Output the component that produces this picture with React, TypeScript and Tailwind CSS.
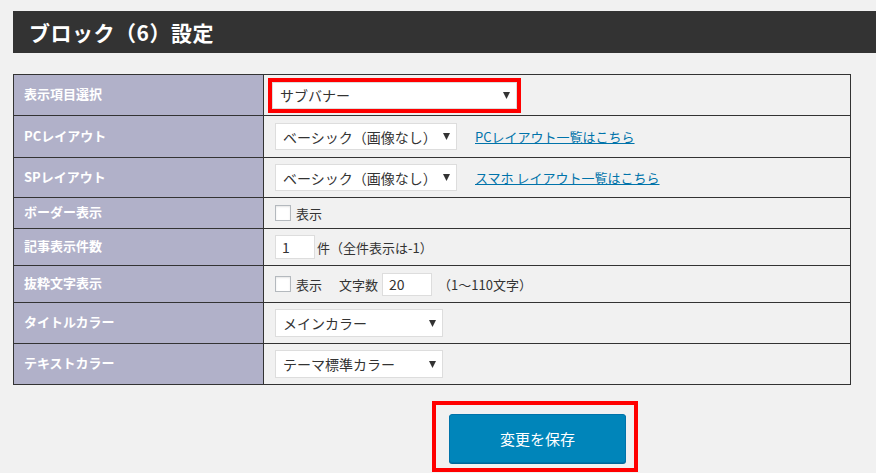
import React from 'react';

const Arrow: React.FC = () => (
  <svg width="7" height="7" viewBox="0 0 7 7" className="shrink-0">
    <path d="M0 0H7L3.5 7Z" fill="#333" />
  </svg>
);

const Select: React.FC<{ value: string; width: string }> = ({ value, width }) => (
  <div
    className={`${width} h-[27px] flex items-center justify-between bg-white border border-[#dddddd] pl-[7px] pr-[6px] text-[14px] leading-none text-[#333]`}
  >
    <span>{value}</span>
    <Arrow />
  </div>
);

const Checkbox: React.FC = () => (
  <span className="inline-block w-4 h-4 shrink-0 bg-white border border-[#b4b9be] shadow-[inset_0_1px_2px_rgba(0,0,0,0.1)]" />
);

const Row: React.FC<{ label: string; height: string; first?: boolean; pad?: string; children: React.ReactNode }> = ({
  label,
  height,
  first,
  pad = 'pl-[11px]',
  children,
}) => (
  <div className={`flex ${height} ${first ? '' : 'border-t border-[#333]'}`}>
    <div className="w-[250px] shrink-0 bg-[#b1b1c9] border-r border-[#333] flex items-center pl-[10px] pb-[3px] text-[13px] font-bold text-white leading-none">
      {label}
    </div>
    <div className={`flex-1 flex items-center ${pad} text-[13px] text-[#333] leading-none`}>{children}</div>
  </div>
);

const App: React.FC = () => {
  return (
    <div className="min-h-screen bg-[#f1f1f1] pl-[13px] pt-[11px] font-['Noto_Sans_CJK_JP','Liberation_Sans',sans-serif]">
      <div className="h-[42px] bg-[#333333] flex items-center pl-[16px]">
        <h1 className="text-[21px] font-bold text-white leading-none tracking-[0.5px]">ブロック（6）設定</h1>
      </div>

      <div className="w-[838px] mt-[21px] border border-[#333]">
        <Row label="表示項目選択" height="h-[40px]" first pad="pl-[4px]">
          <div className="border-4 border-[#ff0000]">
            <Select value="サブバナー" width="w-[245px]" />
          </div>
        </Row>
        <Row label="PCレイアウト" height="h-[42px]">
          <Select value="ベーシック（画像なし）" width="w-[182px]" />
          <a href="#" className="ml-[18px] text-[#0073aa] underline">PCレイアウト一覧はこちら</a>
        </Row>
        <Row label="SPレイアウト" height="h-[40px]">
          <Select value="ベーシック（画像なし）" width="w-[182px]" />
          <a href="#" className="ml-[18px] text-[#0073aa] underline">スマホ レイアウト一覧はこちら</a>
        </Row>
        <Row label="ボーダー表示" height="h-[31px]">
          <Checkbox />
          <span className="ml-[5px]">表示</span>
        </Row>
        <Row label="記事表示件数" height="h-[37px]">
          <div className="w-[40px] h-[24px] bg-white border border-[#dddddd] flex items-center pl-[6px] text-[14px]">1</div>
          <span className="ml-[2px]">件（全件表示は-1）</span>
        </Row>
        <Row label="抜粋文字表示" height="h-[37px]">
          <Checkbox />
          <span className="ml-[5px]">表示</span>
          <span className="ml-[17px]">文字数</span>
          <div className="ml-[4px] w-[50px] h-[23px] bg-white border border-[#dddddd] flex items-center pl-[6px] text-[14px]">20</div>
          <span className="ml-[6px]">（1〜110文字）</span>
        </Row>
        <Row label="タイトルカラー" height="h-[41px]">
          <div className="h-[28px] flex">
            <Select value="メインカラー" width="w-[168px] !h-[28px]" />
          </div>
        </Row>
        <Row label="テキストカラー" height="h-[41px]">
          <div className="h-[28px] flex">
            <Select value="テーマ標準カラー" width="w-[168px] !h-[28px]" />
          </div>
        </Row>
      </div>

      <div className="ml-[419px] mt-[16px] w-[206px] border-4 border-[#ff0000] pl-[13px] pr-[8px] pt-[9px] pb-[5px]">
        <button className="w-[177px] h-[49px] bg-[#0085ba] border border-[#0073aa] rounded-[3px] shadow-[0_1px_0_#006799] text-white text-[15px] leading-none">
          変更を保存
        </button>
      </div>
    </div>
  );
};

export default App;
